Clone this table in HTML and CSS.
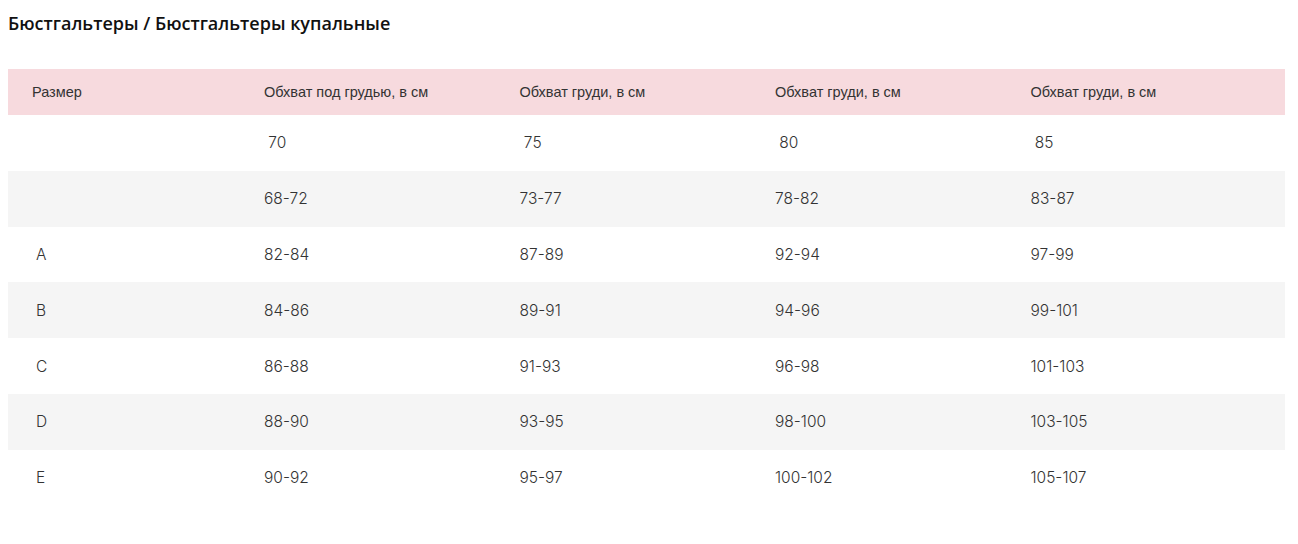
FILE: index.html
```html
<!DOCTYPE html>
<html lang="ru">
<head>
<meta charset="utf-8">
<link rel="stylesheet" href="styles.css">
</head>
<body>
<h1 class="title">Бюстгальтеры / Бюстгальтеры купальные</h1>
<div class="table">
  <div class="row head">
    <div class="cell">Размер</div>
    <div class="cell">Обхват под грудью, в см</div>
    <div class="cell">Обхват груди, в см</div>
    <div class="cell">Обхват груди, в см</div>
    <div class="cell">Обхват груди, в см</div>
  </div>
  <div class="row">
    <div class="cell first"></div>
    <div class="cell">&nbsp;70</div>
    <div class="cell">&nbsp;75</div>
    <div class="cell">&nbsp;80</div>
    <div class="cell">&nbsp;85</div>
  </div>
  <div class="row alt">
    <div class="cell first"></div>
    <div class="cell">68-72</div>
    <div class="cell">73-77</div>
    <div class="cell">78-82</div>
    <div class="cell">83-87</div>
  </div>
  <div class="row">
    <div class="cell first">A</div>
    <div class="cell">82-84</div>
    <div class="cell">87-89</div>
    <div class="cell">92-94</div>
    <div class="cell">97-99</div>
  </div>
  <div class="row alt">
    <div class="cell first">B</div>
    <div class="cell">84-86</div>
    <div class="cell">89-91</div>
    <div class="cell">94-96</div>
    <div class="cell">99-101</div>
  </div>
  <div class="row">
    <div class="cell first">C</div>
    <div class="cell">86-88</div>
    <div class="cell">91-93</div>
    <div class="cell">96-98</div>
    <div class="cell">101-103</div>
  </div>
  <div class="row alt">
    <div class="cell first">D</div>
    <div class="cell">88-90</div>
    <div class="cell">93-95</div>
    <div class="cell">98-100</div>
    <div class="cell">103-105</div>
  </div>
  <div class="row">
    <div class="cell first">E</div>
    <div class="cell">90-92</div>
    <div class="cell">95-97</div>
    <div class="cell">100-102</div>
    <div class="cell">105-107</div>
  </div>
</div>
</body>
</html>
```
FILE: styles.css
```css
html, body {
  margin: 0;
  padding: 0;
  background: #fff;
}
body {
  padding: 0 13px 0 8px;
  color: #333;
}
.title {
  margin: 0;
  padding-top: 12px;
  height: 69px;
  box-sizing: border-box;
  font-family: "Open Sans", "Noto Sans", sans-serif;
  font-weight: 600;
  font-size: 18px;
  line-height: 23px;
  color: #111;
}
.table {
  display: flex;
  flex-direction: column;
}
.row {
  display: grid;
  grid-template-columns: 232px 255.5px 255.5px 255.5px 1fr;
  height: 55.8px;
  align-items: center;
  font-family: "Inter", "Noto Sans", sans-serif;
  font-weight: 300;
  font-size: 15.5px;
  color: #333;
}
.row.alt {
  background: #f5f5f5;
}
.row.head {
  height: 46px;
  background: #f7dade;
  font-family: "Liberation Sans", Arial, sans-serif;
  font-weight: 400;
  font-size: 14.5px;
}
.cell {
  padding-left: 24px;
  white-space: nowrap;
}
.cell.first {
  padding-left: 28px;
}
```
